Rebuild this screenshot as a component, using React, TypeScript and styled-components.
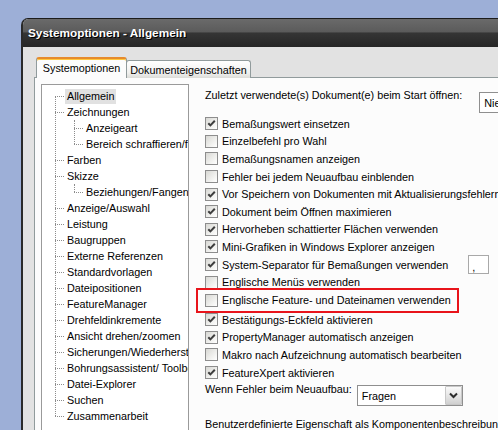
import React from "react";
import styled, { createGlobalStyle } from "styled-components";

const GlobalStyle = createGlobalStyle`
  html, body {
    margin: 0;
    padding: 0;
    width: 498px;
    height: 430px;
    overflow: hidden;
    background: #9dafd7;
  }
  body {
    font-family: "Liberation Sans", Arial, sans-serif;
    font-size: 10.8px;
    color: #000;
  }
`;

const Desktop = styled.div`
  width: 498px;
  height: 430px;
  overflow: hidden;
  padding: 18px 0 0 21px;
  box-sizing: border-box;
`;

const Window = styled.div`
  width: 640px;
  height: 460px;
  border-left: 2px solid #2a2a2a;
  border-top: 1px solid #1c1c1c;
  border-top-left-radius: 7px;
  overflow: hidden;
  background: #e2e2e2;
`;

const TitleBar = styled.div`
  height: 28px;
  display: flex;
  align-items: center;
  padding-left: 5px;
  background: linear-gradient(#6a6a6a 0%, #5b5b5b 46%, #353535 50%, #262626 100%);
  color: #fff;
  font-weight: bold;
  font-size: 11.8px;
  text-shadow: 1px 1px 0 #000;
`;

const Body = styled.div`
  padding: 11px 0 0 11px;
`;

const TabRow = styled.div`
  display: flex;
  align-items: flex-end;
  height: 20px;
  padding-left: 2px;
  margin-bottom: -1px;
  position: relative;
  z-index: 1;
`;

const Tab = styled.div<{ $active?: boolean }>`
  box-sizing: border-box;
  display: flex;
  align-items: center;
  justify-content: center;
  border: 1px solid #919b9c;
  border-bottom: none;
  border-radius: 3px 3px 0 0;
  ${(p) =>
    p.$active
      ? `
    width: 91px;
    height: 21px;
    background: #fcfcfc;
    border-top: 2px solid #e68b2c;
    box-shadow: inset 0 1px 0 #ffc73c;
    padding-bottom: 1px;
  `
      : `
    width: 125px;
    height: 18px;
    background: linear-gradient(#ffffff, #f0f0ee 70%, #dcdcd8);
    margin-left: -1px;
    padding-top: 1px;
  `}
`;

const Panel = styled.div`
  display: flex;
  align-items: flex-start;
  height: 420px;
  background: #fcfcfc;
  border: 1px solid #919b9c;
  padding: 6px 0 0 6px;
`;

const TreeBox = styled.div`
  box-sizing: border-box;
  width: 148px;
  height: 400px;
  flex-shrink: 0;
  border: 1px solid #9a9a9a;
  background: #fff;
  padding-top: 3px;
  overflow: hidden;
  white-space: nowrap;
`;

const TreeList = styled.div<{ $level: 1 | 2 }>`
  position: relative;
  &::before {
    content: "";
    position: absolute;
    left: ${(p) => (p.$level === 1 ? 13 : 32)}px;
    top: ${(p) => (p.$level === 1 ? 8 : 0)}px;
    bottom: 8px;
    border-left: 1px dotted #8c8c8c;
  }
`;

const TreeRow = styled.div<{ $level: 1 | 2 }>`
  position: relative;
  height: 16px;
  display: flex;
  align-items: center;
  padding-left: ${(p) => (p.$level === 1 ? 23 : 42)}px;
  &::before {
    content: "";
    position: absolute;
    left: ${(p) => (p.$level === 1 ? 13 : 32)}px;
    top: 8px;
    width: 9px;
    border-top: 1px dotted #8c8c8c;
  }
`;

const TreeLabel = styled.span<{ $selected?: boolean }>`
  padding: 0 2px;
  line-height: 15px;
  background: ${(p) => (p.$selected ? "#e1e1e1" : "transparent")};
`;

const Content = styled.div`
  margin-left: 16px;
  padding-top: 4px;
  white-space: nowrap;
  display: flex;
  flex-direction: column;
`;

const TopRow = styled.div`
  display: flex;
  align-items: flex-start;
  height: 27px;
  line-height: 14px;
`;

const Combo = styled.div<{ $width: number }>`
  box-sizing: border-box;
  width: ${(p) => p.$width}px;
  height: 21px;
  border: 1px solid #8f8f8f;
  background: #fff;
  display: flex;
  align-items: center;
  justify-content: space-between;
  padding-left: 4px;
  flex-shrink: 0;
`;

const ComboButton = styled.div`
  box-sizing: border-box;
  width: 17px;
  height: 19px;
  border: 1px solid #c8c8c8;
  border-radius: 1px;
  background: linear-gradient(#fafafa, #e2e2e2 60%, #d0d0d0);
  display: flex;
  align-items: center;
  justify-content: center;
`;

const CheckRow = styled.label<{ $highlight?: boolean }>`
  display: flex;
  align-items: center;
  gap: 4px;
  height: 17.6px;
  ${(p) =>
    p.$highlight
      ? `
    box-sizing: border-box;
    width: 263px;
    height: 25px;
    margin: -3px 0 -2px -9px;
    padding-left: 7px;
    border: 2px solid #e8141b;
  `
      : ""}
`;

const Box = styled.span`
  box-sizing: border-box;
  width: 13px;
  height: 13px;
  flex-shrink: 0;
  border: 1px solid #8d8d8d;
  background: linear-gradient(135deg, #d8d8d4, #f4f4f2 70%, #ffffff);
  display: flex;
  align-items: center;
  justify-content: center;
`;

const SmallInput = styled.div`
  box-sizing: border-box;
  width: 21px;
  height: 19px;
  margin-left: 16px;
  border: 1px solid #a9a9a9;
  background: #fff;
  padding: 6px 0 0 3px;
  line-height: 10px;
`;

const SelectRow = styled.div`
  display: flex;
  align-items: flex-start;
  margin-top: 1px;
  line-height: 14px;
`;

const SelectLabel = styled.span`
  margin-right: 5px;
`;

const ComboSlot = styled.div<{ $gap?: number }>`
  margin-top: ${(p) => (p.$gap ? 4 : 3)}px;
  margin-left: ${(p) => p.$gap ?? 0}px;
`;

const FootNote = styled.div`
  margin-top: 11px;
  line-height: 14px;
`;

const Check = ({ on }: { on: boolean }) => (
  <Box>
    {on && (
      <svg width="9" height="9" viewBox="0 0 9 9">
        <path d="M1.3 4.2 L3.4 6.4 L7.8 1.8" fill="none" stroke="#3e3e3e" strokeWidth="2" />
      </svg>
    )}
  </Box>
);

const Chevron = () => (
  <svg width="9" height="7" viewBox="0 0 9 7">
    <path d="M1 1.5 L4.5 5 L8 1.5" fill="none" stroke="#2b2b2b" strokeWidth="2" />
  </svg>
);

type Node = { label: string; children?: string[] };

const tree: Node[] = [
  { label: "Allgemein" },
  { label: "Zeichnungen", children: ["Anzeigeart", "Bereich schraffieren/füllen"] },
  { label: "Farben" },
  { label: "Skizze", children: ["Beziehungen/Fangen"] },
  { label: "Anzeige/Auswahl" },
  { label: "Leistung" },
  { label: "Baugruppen" },
  { label: "Externe Referenzen" },
  { label: "Standardvorlagen" },
  { label: "Dateipositionen" },
  { label: "FeatureManager" },
  { label: "Drehfeldinkremente" },
  { label: "Ansicht drehen/zoomen" },
  { label: "Sicherungen/Wiederherstellen" },
  { label: "Bohrungsassistent/ Toolbox" },
  { label: "Datei-Explorer" },
  { label: "Suchen" },
  { label: "Zusammenarbeit" },
];

const checksTop: [string, boolean][] = [
  ["Bemaßungswert einsetzen", true],
  ["Einzelbefehl pro Wahl", false],
  ["Bemaßungsnamen anzeigen", false],
  ["Fehler bei jedem Neuaufbau einblenden", false],
  ["Vor Speichern von Dokumenten mit Aktualisierungsfehlern warnen", true],
  ["Dokument beim Öffnen maximieren", true],
  ["Hervorheben schattierter Flächen verwenden", true],
  ["Mini-Grafiken in Windows Explorer anzeigen", true],
];

const checksBottom: [string, boolean][] = [
  ["Bestätigungs-Eckfeld aktivieren", true],
  ["PropertyManager automatisch anzeigen", true],
  ["Makro nach Aufzeichnung automatisch bearbeiten", false],
  ["FeatureXpert aktivieren", true],
];

export default function App() {
  return (
    <>
      <GlobalStyle />
      <Desktop>
        <Window>
          <TitleBar>Systemoptionen - Allgemein</TitleBar>
          <Body>
            <TabRow>
              <Tab $active>Systemoptionen</Tab>
              <Tab>Dokumenteigenschaften</Tab>
            </TabRow>
            <Panel>
              <TreeBox>
                <TreeList $level={1}>
                  {tree.map((n) => (
                    <React.Fragment key={n.label}>
                      <TreeRow $level={1}>
                        <TreeLabel $selected={n.label === "Allgemein"}>{n.label}</TreeLabel>
                      </TreeRow>
                      {n.children && (
                        <TreeList $level={2}>
                          {n.children.map((c) => (
                            <TreeRow key={c} $level={2}>
                              <TreeLabel>{c}</TreeLabel>
                            </TreeRow>
                          ))}
                        </TreeList>
                      )}
                    </React.Fragment>
                  ))}
                </TreeList>
              </TreeBox>
              <Content>
                <TopRow>
                  <span>Zuletzt verwendete(s) Dokument(e) beim Start öffnen:</span>
                  <ComboSlot $gap={17}>
                    <Combo $width={60}>Nie</Combo>
                  </ComboSlot>
                </TopRow>
                {checksTop.map(([t, on]) => (
                  <CheckRow key={t}>
                    <Check on={on} />
                    <span>{t}</span>
                  </CheckRow>
                ))}
                <CheckRow>
                  <Check on />
                  <span>System-Separator für Bemaßungen verwenden</span>
                  <SmallInput>,</SmallInput>
                </CheckRow>
                <CheckRow>
                  <Check on={false} />
                  <span>Englische Menüs verwenden</span>
                </CheckRow>
                <CheckRow $highlight>
                  <Check on={false} />
                  <span>Englische Feature- und Dateinamen verwenden</span>
                </CheckRow>
                {checksBottom.map(([t, on]) => (
                  <CheckRow key={t}>
                    <Check on={on} />
                    <span>{t}</span>
                  </CheckRow>
                ))}
                <SelectRow>
                  <SelectLabel>Wenn Fehler beim Neuaufbau:</SelectLabel>
                  <ComboSlot>
                    <Combo $width={106}>
                      <span>Fragen</span>
                      <ComboButton>
                        <Chevron />
                      </ComboButton>
                    </Combo>
                  </ComboSlot>
                </SelectRow>
                <FootNote>Benutzerdefinierte Eigenschaft als Komponentenbeschreibung verwenden</FootNote>
              </Content>
            </Panel>
          </Body>
        </Window>
      </Desktop>
    </>
  );
}
